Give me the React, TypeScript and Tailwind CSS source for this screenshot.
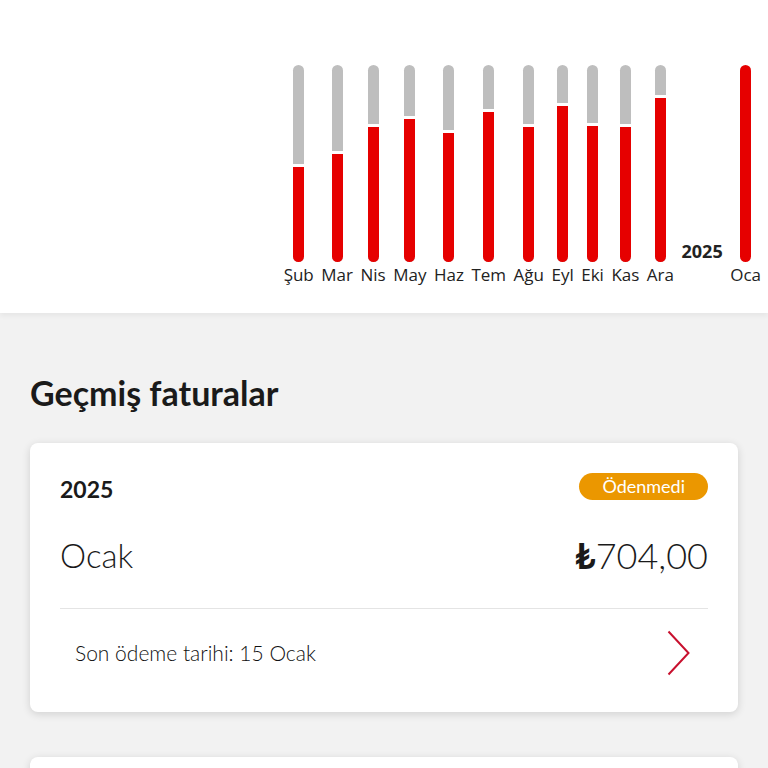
const months = [
  { label: 'Şub', red: 95 },
  { label: 'Mar', red: 108 },
  { label: 'Nis', red: 135 },
  { label: 'May', red: 143 },
  { label: 'Haz', red: 129 },
  { label: 'Tem', red: 150 },
  { label: 'Ağu', red: 135 },
  { label: 'Eyl', red: 156 },
  { label: 'Eki', red: 136 },
  { label: 'Kas', red: 135 },
  { label: 'Ara', red: 164 },
];

function Bar({ red }: { red: number }) {
  const full = red >= 197;
  return (
    <div className="w-[11px] h-[197px] rounded-full overflow-hidden flex flex-col bg-[#bebebe]">
      {!full && <div className="flex-1" />}
      {!full && <div className="h-[3px] bg-white" />}
      <div className="bg-[#e60000]" style={{ height: full ? 197 : red }} />
    </div>
  );
}

function Column({ label, red }: { label: string; red: number }) {
  return (
    <div className="flex flex-col items-center gap-[3px]">
      <Bar red={red} />
      <span className="text-[17px] leading-[20px] text-[#222]">{label}</span>
    </div>
  );
}

export default function App() {
  return (
    <div className="w-[768px] h-[768px] overflow-hidden bg-[#f2f2f2] font-['Lato','Open_Sans',sans-serif] text-[#1a1a1a]">
      {/* Usage chart */}
      <section className="relative z-10 bg-white pt-[65px] pb-[28px] shadow-[0_3px_5px_rgba(0,0,0,0.05)]">
        <div className="flex items-end justify-end gap-[7.5px] pr-[7px] font-['Open_Sans',sans-serif]">
          {months.map((m) => (
            <Column key={m.label} label={m.label} red={m.red} />
          ))}
          <span className="mb-[24px] text-[18px] leading-[20px] font-bold text-[#222]">2025</span>
          <Column label="Oca" red={197} />
        </div>
      </section>

      {/* Past bills */}
      <section className="px-[30px] pt-[61px]">
        <h2 className="text-[34px] leading-[38px] font-bold mb-[31px]">Geçmiş faturalar</h2>

        <div className="bg-white rounded-[8px] shadow-[0_2px_8px_rgba(0,0,0,0.14)] px-[30px] pt-[30px]">
          <div className="flex justify-between items-start h-[27px]">
            <span className="relative top-[3px] text-[23px] leading-[27px] font-bold">2025</span>
            <span className="h-[27px] px-[23px] rounded-full bg-[#eb9700] text-white text-[18px] leading-[27px]">
              Ödenmedi
            </span>
          </div>
          <div className="flex justify-between items-end mt-[33px] pb-[31px] border-b border-[#e4e4e4]">
            <span className="text-[33px] leading-[44px] font-light">Ocak</span>
            <span className="text-[36px] leading-[44px] font-light">
              <span className="font-bold">₺</span>704,00
            </span>
          </div>
          <div className="flex justify-between items-center pl-[15px] pr-[18px] pt-[21px] pb-[36px]">
            <span className="text-[21px] font-light text-[#111]">Son ödeme tarihi: 15 Ocak</span>
            <svg width="23" height="46" viewBox="0 0 23 46" fill="none" className="text-[#c8102e]">
              <polyline points="1.5,1.5 21.5,23 1.5,44.5" stroke="currentColor" strokeWidth="2" />
            </svg>
          </div>
        </div>

        <div className="bg-white rounded-[8px] shadow-[0_2px_8px_rgba(0,0,0,0.14)] mt-[45px] h-[200px]" />
      </section>
    </div>
  );
}
